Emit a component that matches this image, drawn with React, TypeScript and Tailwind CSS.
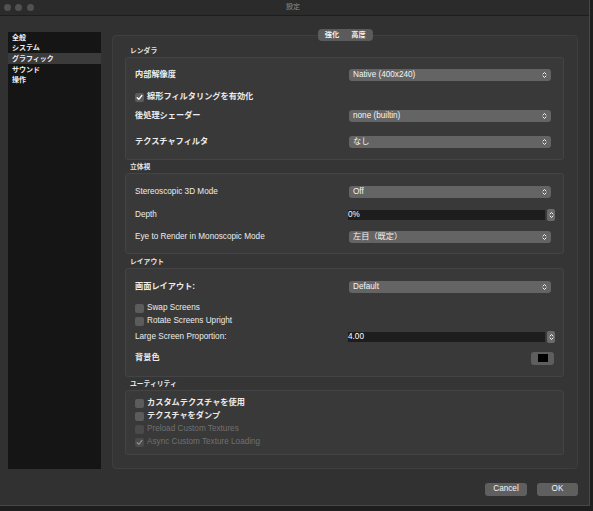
import React from "react";

const font = { fontFamily: '"Liberation Sans", "Noto Sans CJK JP", sans-serif' };

const Chevrons = () => (
  <svg width="5" height="8" viewBox="0 0 5 8" fill="none" stroke="#f2f2f2" strokeWidth="1" strokeLinecap="round" strokeLinejoin="round">
    <path d="M1 3 L2.5 1.5 L4 3" />
    <path d="M1 5 L2.5 6.5 L4 5" />
  </svg>
);

const Combo = ({ value }: { value: string }) => (
  <div className="flex items-center h-[12px] w-[202px] rounded-[3px] bg-[#646464] pl-[4px] pr-[4px] text-[#f4f4f4]">
    <span className="flex-1 leading-none">{value}</span>
    <Chevrons />
  </div>
);

const Spin = ({ value }: { value: string }) => (
  <div className="flex items-center w-[207px] -mr-[4px]">
    <div className="flex-1 h-[10px] bg-[#1d1d1d] flex items-center text-white leading-none">{value}</div>
    <div className="ml-[2px] w-[8px] h-[12px] rounded-[2px] bg-[#6a6a6a] flex items-center justify-center">
      <Chevrons />
    </div>
  </div>
);

const Check = ({ checked = false, disabled = false, label }: { checked?: boolean; disabled?: boolean; label: string }) => (
  <div className={`flex items-center h-[13px] ${disabled ? "text-[#707070]" : "text-[#ececec]"}`}>
    <div className={`w-[9px] h-[9px] rounded-[2px] flex items-center justify-center ${disabled ? "bg-[#4a4a4a]" : "bg-[#5c5c5c]"}`}>
      {checked && (
        <svg width="7" height="7" viewBox="0 0 7 7" fill="none" stroke={disabled ? "#8a8a8a" : "#ffffff"} strokeWidth="1.3" strokeLinecap="round" strokeLinejoin="round">
          <path d="M1.2 3.7 L2.8 5.3 L5.9 1.5" />
        </svg>
      )}
    </div>
    <span className="ml-[3px] leading-none">{label}</span>
  </div>
);

const Row = ({ label, bold = false, children, className = "" }: { label: string; bold?: boolean; children?: React.ReactNode; className?: string }) => (
  <div className={`flex items-center h-[13px] ${className}`}>
    <span className={`flex-1 leading-none text-[#ececec] ${bold ? "font-bold" : ""}`}>{label}</span>
    {children}
  </div>
);

const Group = ({ title, height, className = "", children }: { title: string; height: string; className?: string; children: React.ReactNode }) => (
  <div className={className}>
    <div className="h-[12px] flex items-center pl-[5px] text-[6.8px] font-bold text-[#e6e6e6] leading-none">{title}</div>
    <div className={`${height} rounded-[3px] border border-[#444444] bg-[#393939] pl-[9px] pr-[12px]`}>{children}</div>
  </div>
);

export default function App() {
  const menu = ["全般", "システム", "グラフィック", "サウンド", "操作"];
  return (
    <div className="w-[593px] h-[511px] bg-[#1e1e1e] overflow-hidden text-[8.2px]" style={font}>
      <div className="w-[590px] h-[506px] bg-[#313131] border-r border-b border-[#474747] flex flex-col">
        {/* title bar */}
        <div className="relative h-[16px] bg-[#2b2b2b] border-b border-[#1d1d1d] flex items-center pl-[4px] gap-[4px]">
          <div className="w-[7px] h-[7px] rounded-full bg-[#515151]" />
          <div className="w-[7px] h-[7px] rounded-full bg-[#515151]" />
          <div className="w-[7px] h-[7px] rounded-full bg-[#515151] ml-[1px]" />
          <span className="absolute left-[286px] top-[3px] text-[7px] text-[#8e8e8e] leading-none">設定</span>
        </div>

        <div className="flex pt-[13px] pl-[8px]">
          {/* sidebar */}
          <div className="mt-[3px] w-[93px] h-[437px] bg-[#151515] flex flex-col">
            {menu.map((m) => (
              <div
                key={m}
                className={`h-[10.6px] flex items-center pl-[4px] text-[7px] font-bold leading-none text-[#f0f0f0] ${m === "グラフィック" ? "bg-[#3b3b3b]" : ""}`}
              >
                {m}
              </div>
            ))}
          </div>

          {/* tab widget */}
          <div className="ml-[11px] w-[466px] flex flex-col items-center">
            <div className="relative z-10 h-[12px] w-[55px] rounded-[4px] bg-[#5b5b5b] flex items-center text-[7.2px] font-bold text-[#f0f0f0] leading-none">
              <div className="w-[27px] text-center pl-[2px]">強化</div>
              <div className="w-[28px] text-center">高度</div>
            </div>
            <div className="-mt-[6px] w-[466px] h-[434px] rounded-[4px] border border-[#3f3f3f] bg-[#353535] pt-[9px] pl-[12px] pr-[13px]">
              <Group title="レンダラ" height="h-[103px]">
                <Row label="内部解像度" bold className="mt-[10.5px]">
                  <Combo value="Native (400x240)" />
                </Row>
                <div className="mt-[9px] font-bold">
                  <Check checked label="線形フィルタリングを有効化" />
                </div>
                <Row label="後処理シェーダー" bold className="mt-[6px]">
                  <Combo value="none (builtin)" />
                </Row>
                <Row label="テクスチャフィルタ" bold className="mt-[13px]">
                  <Combo value="なし" />
                </Row>
              </Group>

              <Group title="立体視" height="h-[81px]" className="mt-[1px]">
                <Row label="Stereoscopic 3D Mode" className="mt-[11.5px]">
                  <Combo value="Off" />
                </Row>
                <Row label="Depth" className="mt-[10px]">
                  <Spin value="0%" />
                </Row>
                <Row label="Eye to Render in Monoscopic Mode" className="mt-[9px]">
                  <Combo value="左目（既定）" />
                </Row>
              </Group>

              <Group title="レイアウト" height="h-[109px]" className="mt-[2px]">
                <Row label="画面レイアウト:" bold className="mt-[11.5px]">
                  <Combo value="Default" />
                </Row>
                <div className="mt-[8px]">
                  <Check label="Swap Screens" />
                </div>
                <Check label="Rotate Screens Upright" />
                <Row label="Large Screen Proportion:" className="mt-[3px]">
                  <Spin value="4.00" />
                </Row>
                <Row label="背景色" bold className="mt-[8px]">
                  <div className="w-[23px] h-[13px] -mr-[3px] rounded-[3px] bg-[#5e5e5e] flex items-center justify-center">
                    <div className="w-[10px] h-[8px] bg-black" />
                  </div>
                </Row>
              </Group>

              <Group title="ユーティリティ" height="h-[65px]" className="mt-[1px]">
                <div className="mt-[5.5px] font-bold">
                  <Check label="カスタムテクスチャを使用" />
                  <Check label="テクスチャをダンプ" />
                </div>
                <Check disabled label="Preload Custom Textures" />
                <Check disabled checked label="Async Custom Texture Loading" />
              </Group>
            </div>
          </div>
        </div>

        {/* buttons */}
        <div className="mt-[14px] flex justify-end gap-[10px] pr-[11px]">
          <button className="w-[42px] h-[13px] rounded-[3px] bg-[#5f5f5f] text-[#f4f4f4] leading-none">Cancel</button>
          <button className="w-[41px] h-[13px] rounded-[3px] bg-[#5f5f5f] text-[#f4f4f4] leading-none">OK</button>
        </div>
      </div>
    </div>
  );
}
